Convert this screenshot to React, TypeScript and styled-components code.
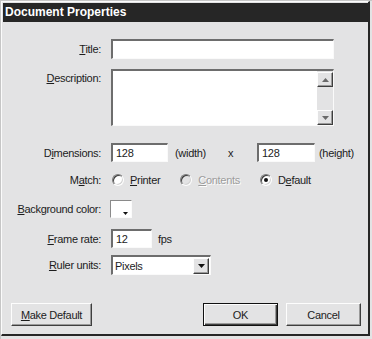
import styled, { createGlobalStyle } from 'styled-components';

const GlobalStyle = createGlobalStyle`
  html, body {
    margin: 0;
    padding: 0;
    background: #e3e3e4;
  }
  body {
    font-family: "Liberation Sans", Arial, sans-serif;
  }
`;

const BG = '#e3e3e4';
const INK = '#1c1c1c';

const Screen = styled.div`
  width: 372px;
  height: 339px;
  box-sizing: border-box;
  border-top: 1px solid #c6c6c6;
  border-left: 1px solid #c6c6c6;
  background: ${BG};
`;

const Frame = styled.div`
  width: 369px;
  height: 335px;
  box-sizing: border-box;
  border-style: solid;
  border-width: 1px 2px 2px 1px;
  border-color: #fbfbfb #262626 #262626 #fbfbfb;
  padding: 1px 0 0 1px;
  display: flex;
  flex-direction: column;
`;

const TitleBar = styled.div`
  height: 19px;
  line-height: 19px;
  background: #262626;
  color: #fff;
  font-weight: 700;
  font-size: 12px;
  padding-left: 2px;
`;

const Body = styled.div`
  display: flex;
  flex-direction: column;
  font-size: 11px;
  letter-spacing: -0.3px;
  color: ${INK};
`;

const Row = styled.div<{ $top: number; $h: number; $alignTop?: boolean }>`
  display: flex;
  align-items: ${(p) => (p.$alignTop ? 'flex-start' : 'center')};
  margin-top: ${(p) => p.$top}px;
  height: ${(p) => p.$h}px;
`;

const Label = styled.div<{ $pt?: number }>`
  width: 98px;
  margin-right: 10px;
  text-align: right;
  white-space: nowrap;
  padding-top: ${(p) => p.$pt ?? 0}px;
`;

const Field = styled.input<{ $w: number }>`
  box-sizing: border-box;
  width: ${(p) => p.$w}px;
  height: 100%;
  margin: 0;
  padding: 0 0 0 3px;
  border-style: solid;
  border-width: 2px 1px 1px 2px;
  border-color: #6d6d6d #fafafa #fafafa #6d6d6d;
  background: #fff;
  font-family: inherit;
  font-size: 11px;
  letter-spacing: -0.3px;
  color: ${INK};
  outline: none;
`;

const TextBox = styled.div`
  box-sizing: border-box;
  width: 223px;
  height: 100%;
  display: flex;
  border-style: solid;
  border-width: 2px 1px 1px 2px;
  border-color: #6d6d6d #fafafa #fafafa #6d6d6d;
  background: #fff;
`;

const TextArea = styled.div`
  flex: 1;
`;

const ScrollTrack = styled.div`
  width: 16px;
  background: ${BG};
  display: flex;
  flex-direction: column;
  justify-content: space-between;
  padding: 1px 0 0;
`;

const ScrollButton = styled.div`
  box-sizing: border-box;
  height: 15px;
  display: flex;
  align-items: center;
  justify-content: center;
  background: ${BG};
  border-style: solid;
  border-width: 1px;
  border-color: #fdfdfd #3e3e3e #3e3e3e #fdfdfd;
  box-shadow: inset -1px -1px #9a9a9a;
`;

const Unit = styled.span<{ $w?: number; $ml?: number }>`
  display: inline-block;
  width: ${(p) => (p.$w ? `${p.$w}px` : 'auto')};
  margin-left: ${(p) => p.$ml ?? 0}px;
  white-space: nowrap;
`;

const RadioGroup = styled.div`
  display: flex;
  align-items: center;
  gap: 20px;
  margin-left: 1px;
`;

const RadioItem = styled.label<{ $disabled?: boolean }>`
  display: flex;
  align-items: center;
  gap: 6px;
  color: ${(p) => (p.$disabled ? '#9c9c9c' : INK)};
  text-shadow: ${(p) => (p.$disabled ? '1px 1px 0 #fdfdfd' : 'none')};
`;

const RadioDot = styled.span<{ $checked?: boolean; $disabled?: boolean }>`
  box-sizing: border-box;
  width: 12px;
  height: 12px;
  border-radius: 50%;
  border-style: solid;
  border-width: 1px;
  border-color: #7a7a7a #fdfdfd #fdfdfd #7a7a7a;
  box-shadow: inset 1px 1px 0 #3c3c3c, inset -1px -1px 0 #d2d2d2;
  background: ${(p) => (p.$disabled ? BG : '#fff')};
  display: flex;
  align-items: center;
  justify-content: center;

  &::after {
    content: '';
    display: ${(p) => (p.$checked ? 'block' : 'none')};
    width: 4px;
    height: 4px;
    border-radius: 50%;
    background: #111;
  }
`;

const Swatch = styled.div`
  position: relative;
  box-sizing: border-box;
  width: 22px;
  height: 18px;
  margin-left: -1px;
  border-style: solid;
  border-width: 1px;
  border-color: #8a8a8a #fbfbfb #fbfbfb #8a8a8a;
  background: #fff;
`;

const SwatchArrow = styled.svg`
  position: absolute;
  right: 3px;
  bottom: 2px;
`;

const Select = styled.div`
  box-sizing: border-box;
  width: 100px;
  height: 100%;
  display: flex;
  align-items: center;
  border-style: solid;
  border-width: 2px 1px 1px 2px;
  border-color: #6d6d6d #fafafa #fafafa #6d6d6d;
  background: #fff;
  padding-right: 1px;
`;

const SelectText = styled.span`
  flex: 1;
  padding-left: 2px;
`;

const SelectButton = styled.div`
  box-sizing: border-box;
  width: 16px;
  height: 16px;
  display: flex;
  align-items: center;
  justify-content: center;
  background: ${BG};
  border-style: solid;
  border-width: 1px;
  border-color: #fdfdfd #3e3e3e #3e3e3e #fdfdfd;
  box-shadow: inset -1px -1px #9a9a9a;
`;

const Footer = styled.div`
  display: flex;
  align-items: center;
  margin-top: 28px;
  padding: 0 7px 0 8px;
  gap: 8px;
`;

const Spacer = styled.div`
  flex: 1;
`;

const Button = styled.button<{ $w: number; $default?: boolean }>`
  box-sizing: border-box;
  width: ${(p) => p.$w}px;
  height: 23px;
  margin: 0;
  padding: 0;
  font-family: inherit;
  font-size: 11px;
  letter-spacing: -0.3px;
  color: ${INK};
  background: ${BG};
  border-style: solid;
  border-width: 1px;
  border-color: ${(p) =>
    p.$default ? '#111' : '#fdfdfd #3e3e3e #3e3e3e #fdfdfd'};
  box-shadow: ${(p) =>
    p.$default
      ? 'inset 1px 1px #fdfdfd, inset -1px -1px #3e3e3e, inset -2px -2px #9a9a9a'
      : 'inset -1px -1px #9a9a9a'};
`;

const Arrow = ({ up, color }: { up?: boolean; color: string }) => (
  <svg width="7" height="4" viewBox="0 0 7 4">
    <path d={up ? 'M3.5 0 L7 4 L0 4 Z' : 'M0 0 L7 0 L3.5 4 Z'} fill={color} />
  </svg>
);

export default function App() {
  return (
    <>
      <GlobalStyle />
      <Screen>
        <Frame>
          <TitleBar>Document Properties</TitleBar>
          <Body>
            <Row $top={17} $h={20}>
              <Label>
                <u>T</u>itle:
              </Label>
              <Field $w={223} readOnly defaultValue="" />
            </Row>

            <Row $top={10} $h={57} $alignTop>
              <Label $pt={3}>
                <u>D</u>escription:
              </Label>
              <TextBox>
                <TextArea />
                <ScrollTrack>
                  <ScrollButton>
                    <Arrow up color="#6a6a6a" />
                  </ScrollButton>
                  <ScrollButton>
                    <Arrow color="#6a6a6a" />
                  </ScrollButton>
                </ScrollTrack>
              </TextBox>
            </Row>

            <Row $top={17} $h={19}>
              <Label>
                D<u>i</u>mensions:
              </Label>
              <Field $w={57} readOnly defaultValue="128" />
              <Unit $w={53} $ml={7}>(width)</Unit>
              <Unit $w={29}>x</Unit>
              <Field $w={58} readOnly defaultValue="128" />
              <Unit $ml={4}>(height)</Unit>
            </Row>

            <Row $top={10} $h={16}>
              <Label>
                M<u>a</u>tch:
              </Label>
              <RadioGroup>
                <RadioItem>
                  <RadioDot />
                  <span>
                    <u>P</u>rinter
                  </span>
                </RadioItem>
                <RadioItem $disabled>
                  <RadioDot $disabled />
                  <span>
                    <u>C</u>ontents
                  </span>
                </RadioItem>
                <RadioItem>
                  <RadioDot $checked />
                  <span>
                    D<u>e</u>fault
                  </span>
                </RadioItem>
              </RadioGroup>
            </Row>

            <Row $top={12} $h={18}>
              <Label>
                <u>B</u>ackground color:
              </Label>
              <Swatch>
                <SwatchArrow width="5" height="3" viewBox="0 0 5 3">
                  <path d="M0 0 L5 0 L2.5 3 Z" fill="#111" />
                </SwatchArrow>
              </Swatch>
            </Row>

            <Row $top={11} $h={19}>
              <Label>
                <u>F</u>rame rate:
              </Label>
              <Field $w={41} readOnly defaultValue="12" />
              <Unit $ml={6}>fps</Unit>
            </Row>

            <Row $top={7} $h={20}>
              <Label>
                <u>R</u>uler units:
              </Label>
              <Select>
                <SelectText>Pixels</SelectText>
                <SelectButton>
                  <Arrow color="#111" />
                </SelectButton>
              </Select>
            </Row>

            <Footer>
              <Button $w={81}>
                <u>M</u>ake Default
              </Button>
              <Spacer />
              <Button $w={75} $default>
                OK
              </Button>
              <Button $w={75}>Cancel</Button>
            </Footer>
          </Body>
        </Frame>
      </Screen>
    </>
  );
}
